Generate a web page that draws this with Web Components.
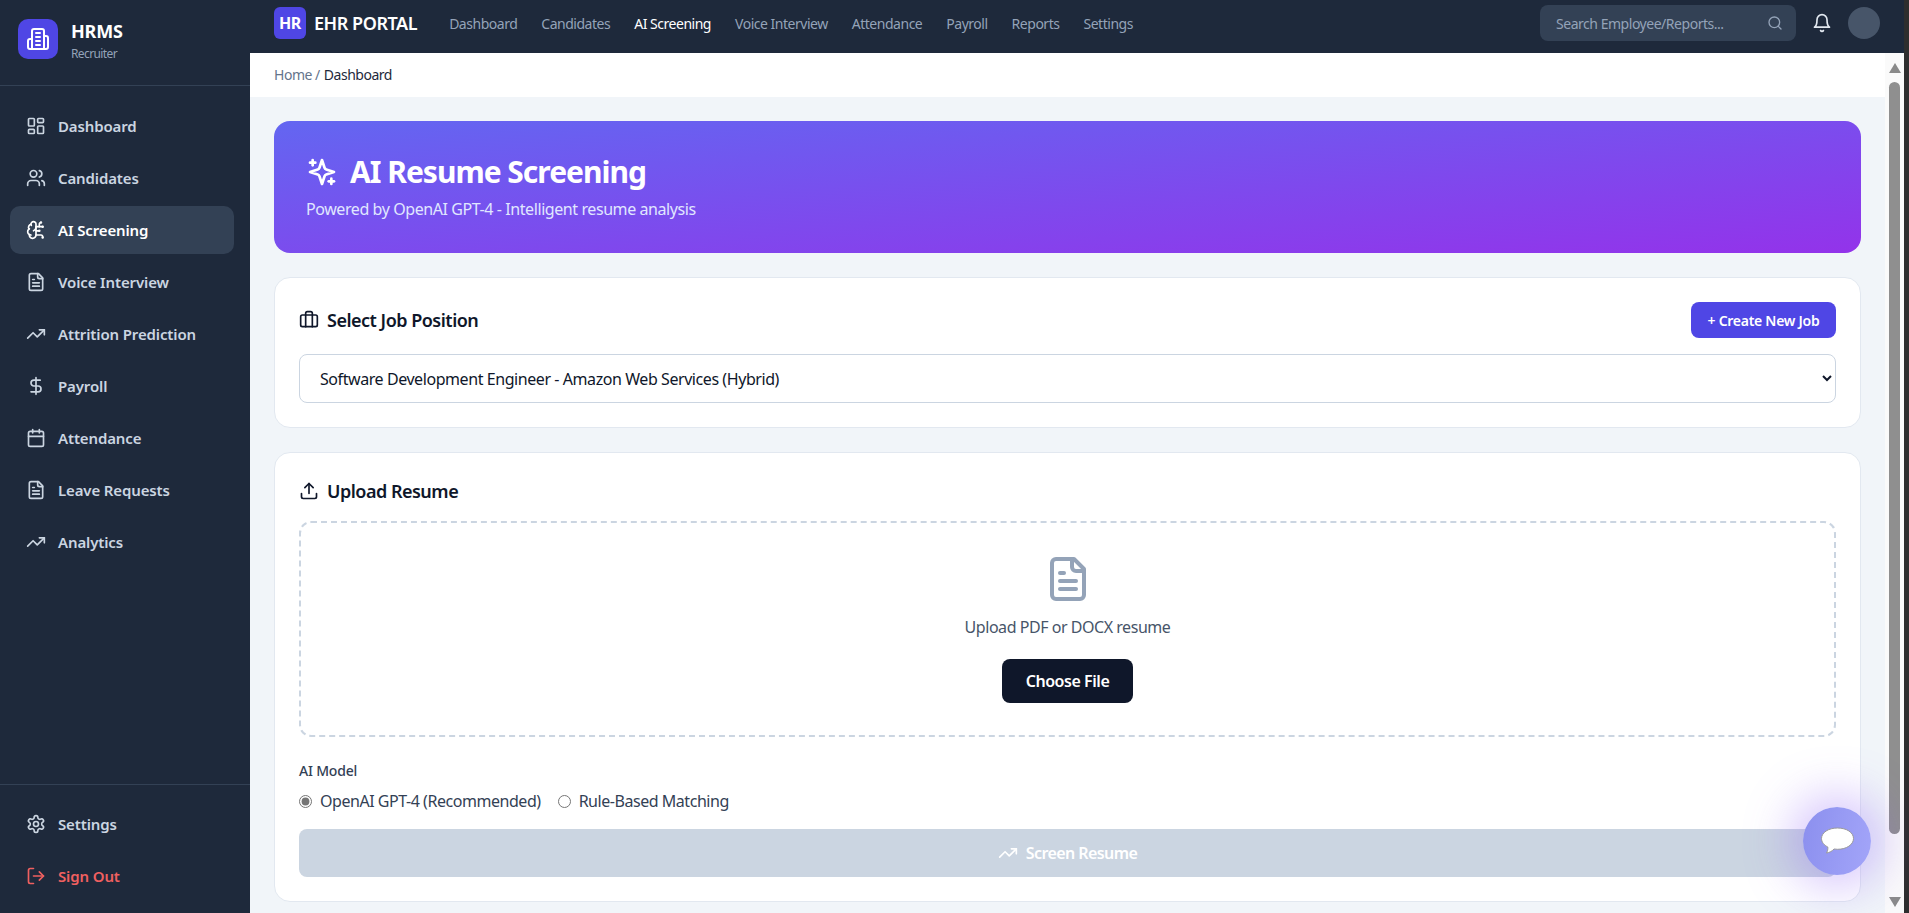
<!DOCTYPE html>
<html lang="en"><head><meta charset="utf-8"><title>HRMS</title>
<style>
html,body{margin:0;padding:0;height:100%;overflow:hidden;background:#2e2e2e}
body{font-family:"Noto Sans","Open Sans",sans-serif}
</style></head><body>
<app-shell>
  <hr-sidebar slot="side"></hr-sidebar>
  <top-bar slot="top"></top-bar>
  <bread-crumb slot="main"></bread-crumb>
  <page-body slot="main">
    <hero-banner></hero-banner>
    <job-card></job-card>
    <upload-card></upload-card>
  </page-body>
  <fake-scrollbar slot="scroll"></fake-scrollbar>
</app-shell>
<chat-fab></chat-fab>
<script>
const P={
dashboard:'<rect x="3" y="3" width="7" height="9" rx="1"/><rect x="14" y="3" width="7" height="5" rx="1"/><rect x="14" y="12" width="7" height="9" rx="1"/><rect x="3" y="16" width="7" height="5" rx="1"/>',
users:'<path d="M16 21v-2a4 4 0 0 0-4-4H6a4 4 0 0 0-4 4v2"/><circle cx="9" cy="7" r="4"/><path d="M22 21v-2a4 4 0 0 0-3-3.87"/><path d="M16 3.13a4 4 0 0 1 0 7.75"/>',
brain:'<path d="M12 5a3 3 0 1 0-5.997.125 4 4 0 0 0-2.526 5.77 4 4 0 0 0 .556 6.588A4 4 0 1 0 12 18Z"/><path d="M9 13a4.5 4.5 0 0 0 3-4"/><path d="M6.003 5.125A3 3 0 0 0 6.401 6.5"/><path d="M3.477 10.896a4 4 0 0 1 .585-.396"/><path d="M6 18a4 4 0 0 1-1.967-.516"/><path d="M12 13h4"/><path d="M12 18h6a2 2 0 0 1 2 2v1"/><path d="M12 8h8"/><path d="M16 8V5a2 2 0 0 1 2-2"/><circle cx="16" cy="13" r=".5"/><circle cx="18" cy="3" r=".5"/><circle cx="20" cy="21" r=".5"/><circle cx="20" cy="8" r=".5"/>',
file:'<path d="M15 2H6a2 2 0 0 0-2 2v16a2 2 0 0 0 2 2h12a2 2 0 0 0 2-2V7Z"/><path d="M14 2v4a2 2 0 0 0 2 2h4"/><path d="M10 9H8"/><path d="M16 13H8"/><path d="M16 17H8"/>',
trend:'<polyline points="22 7 13.5 15.5 8.5 10.5 2 17"/><polyline points="16 7 22 7 22 13"/>',
dollar:'<line x1="12" x2="12" y1="2" y2="22"/><path d="M17 5H9.5a3.5 3.5 0 0 0 0 7h5a3.5 3.5 0 0 1 0 7H6"/>',
calendar:'<path d="M8 2v4"/><path d="M16 2v4"/><rect x="3" y="4" width="18" height="18" rx="2"/><path d="M3 10h18"/>',
settings:'<path d="M12.22 2h-.44a2 2 0 0 0-2 2v.18a2 2 0 0 1-1 1.73l-.43.25a2 2 0 0 1-2 0l-.15-.08a2 2 0 0 0-2.73.73l-.22.38a2 2 0 0 0 .73 2.73l.15.1a2 2 0 0 1 1 1.72v.51a2 2 0 0 1-1 1.74l-.15.09a2 2 0 0 0-.73 2.73l.22.38a2 2 0 0 0 2.73.73l.15-.08a2 2 0 0 1 2 0l.43.25a2 2 0 0 1 1 1.73V20a2 2 0 0 0 2 2h.44a2 2 0 0 0 2-2v-.18a2 2 0 0 1 1-1.73l.43-.25a2 2 0 0 1 2 0l.15.08a2 2 0 0 0 2.73-.73l.22-.39a2 2 0 0 0-.73-2.73l-.15-.08a2 2 0 0 1-1-1.74v-.5a2 2 0 0 1 1-1.74l.15-.09a2 2 0 0 0 .73-2.73l-.22-.38a2 2 0 0 0-2.73-.73l-.15.08a2 2 0 0 1-2 0l-.43-.25a2 2 0 0 1-1-1.73V4a2 2 0 0 0-2-2z"/><circle cx="12" cy="12" r="3"/>',
logout:'<path d="M9 21H5a2 2 0 0 1-2-2V5a2 2 0 0 1 2-2h4"/><polyline points="16 17 21 12 16 7"/><line x1="21" x2="9" y1="12" y2="12"/>',
building:'<path d="M6 22V4a2 2 0 0 1 2-2h8a2 2 0 0 1 2 2v18Z"/><path d="M6 12H4a2 2 0 0 0-2 2v6a2 2 0 0 0 2 2h2"/><path d="M18 9h2a2 2 0 0 1 2 2v9a2 2 0 0 1-2 2h-2"/><path d="M10 6h4"/><path d="M10 10h4"/><path d="M10 14h4"/><path d="M10 18h4"/>',
search:'<circle cx="11" cy="11" r="8"/><path d="m21 21-4.3-4.3"/>',
bell:'<path d="M6 8a6 6 0 0 1 12 0c0 7 3 9 3 9H3s3-2 3-9"/><path d="M10.3 21a1.94 1.94 0 0 0 3.4 0"/>',
sparkles:'<path d="m12 3-1.912 5.813a2 2 0 0 1-1.275 1.275L3 12l5.813 1.912a2 2 0 0 1 1.275 1.275L12 21l1.912-5.813a2 2 0 0 1 1.275-1.275L21 12l-5.813-1.912a2 2 0 0 1-1.275-1.275L12 3Z"/><path d="M5 3v4"/><path d="M19 17v4"/><path d="M3 5h4"/><path d="M17 19h4"/>',
briefcase:'<path d="M16 20V4a2 2 0 0 0-2-2h-4a2 2 0 0 0-2 2v16"/><rect x="2" y="6" width="20" height="14" rx="2"/>',
upload:'<path d="M21 15v4a2 2 0 0 1-2 2H5a2 2 0 0 1-2-2v-4"/><polyline points="17 8 12 3 7 8"/><line x1="12" x2="12" y1="3" y2="15"/>'
};
const icon=(n,s=20,w=2)=>`<svg width="${s}" height="${s}" viewBox="0 0 24 24" fill="none" stroke="currentColor" stroke-width="${w}" stroke-linecap="round" stroke-linejoin="round" style="display:block;flex:none">${P[n]}</svg>`;
function def(name,html){customElements.define(name,class extends HTMLElement{constructor(){super();this.attachShadow({mode:'open'}).innerHTML=typeof html==='function'?html(this):html;}});}

def('app-shell',`<style>
:host{display:flex;width:1904px;height:913px;overflow:hidden;background:#f1f5f9}
.col{flex:1;min-width:0;display:flex;flex-direction:column}
.row{flex:1;min-height:0;display:flex}
.scroll{flex:1;min-width:0;overflow:hidden}
</style><slot name="side"></slot><div class="col"><slot name="top"></slot><div class="row"><div class="scroll"><slot name="main"></slot></div><slot name="scroll"></slot></div></div>`);

customElements.define('nav-item',class extends HTMLElement{constructor(){super();const r=this.attachShadow({mode:'open'});
r.innerHTML=`<style>
:host{display:flex;align-items:center;gap:12px;height:48px;margin:0 16px 4px 10px;padding:0 0 0 16px;border-radius:10px;font-size:15px;font-weight:600;letter-spacing:-.13px;color:#cbd5e1}
:host([active]){background:#334155;color:#fff}
:host([danger]){color:#f06060}
</style>${icon(this.getAttribute('icon'))}<slot></slot>`;}});

def('hr-sidebar',`<style>
:host{display:flex;flex-direction:column;width:250px;flex:none;height:913px;background:#1e293b;color:#fff}
.brand{display:flex;align-items:center;gap:13px;box-sizing:border-box;height:86px;padding:0 18px 8px;border-bottom:1px solid #334155}
.logo{width:40px;height:40px;border-radius:10px;background:#4f46e5;display:flex;align-items:center;justify-content:center;color:#fff}
.tx{padding-top:4px}
.t{font-size:18px;font-weight:700;line-height:24px;letter-spacing:-.15px}
.s{font-size:12px;line-height:16px;color:#94a3b8;margin-top:3px;letter-spacing:-.6px}
nav{flex:1;padding-top:16px}
.foot{border-top:1px solid #334155;padding:15px 0 0;height:129px;box-sizing:border-box}
</style>
<div class="brand"><div class="logo">${icon('building',24)}</div><div class="tx"><div class="t">HRMS</div><div class="s">Recruiter</div></div></div>
<nav>
<nav-item icon="dashboard">Dashboard</nav-item>
<nav-item icon="users">Candidates</nav-item>
<nav-item icon="brain" active>AI Screening</nav-item>
<nav-item icon="file">Voice Interview</nav-item>
<nav-item icon="trend">Attrition Prediction</nav-item>
<nav-item icon="dollar">Payroll</nav-item>
<nav-item icon="calendar">Attendance</nav-item>
<nav-item icon="file">Leave Requests</nav-item>
<nav-item icon="trend">Analytics</nav-item>
</nav>
<div class="foot"><nav-item icon="settings">Settings</nav-item><nav-item icon="logout" danger>Sign Out</nav-item></div>`);

def('top-bar',`<style>
:host{display:flex;align-items:center;flex:none;background:#1e293b;padding:0 24px 7px;box-sizing:border-box;height:53px;color:#fff}
.hr{width:32px;height:32px;border-radius:6px;background:#4f46e5;display:flex;align-items:center;justify-content:center;font-size:16px;font-weight:700;letter-spacing:-.3px}
.name{font-size:18px;font-weight:600;margin-left:8px;letter-spacing:-.45px}
.links{display:flex;gap:24px;margin-left:32px;font-size:14px;letter-spacing:-.48px;color:#94a3b8}
.on{color:#fff}
.sp{flex:1}
.search{display:flex;align-items:center;justify-content:space-between;width:256px;height:36px;box-sizing:border-box;padding:0 13px 0 16px;border-radius:8px;background:#334155;color:#94a3b8;font-size:14px;letter-spacing:-.47px}
.bell{margin-left:16px;color:#e2e8f0}
.av{width:32px;height:32px;border-radius:50%;background:#475569;margin-left:16px}
</style>
<div class="hr">HR</div><div class="name">EHR PORTAL</div>
<div class="links"><span>Dashboard</span><span>Candidates</span><span class="on">AI Screening</span><span>Voice Interview</span><span>Attendance</span><span>Payroll</span><span>Reports</span><span>Settings</span></div>
<div class="sp"></div>
<div class="search"><span>Search Employee/Reports...</span>${icon('search',16)}</div>
<div class="bell">${icon('bell',20)}</div><div class="av"></div>`);

def('bread-crumb',`<style>
:host{display:flex;align-items:center;height:44px;box-sizing:border-box;padding:0 24px 2px;background:#fff;font-size:14px;letter-spacing:-.48px;color:#64748b}
b{font-weight:400;color:#1e293b;margin-left:4px}
</style><span>Home /</span><b>Dashboard</b>`);

def('page-body',`<style>:host{display:flex;flex-direction:column;gap:24px;padding:24px}</style><slot></slot>`);

def('hero-banner',`<style>
:host{display:block;height:132px;box-sizing:border-box;padding:33px 32px 31px;border-radius:16px;background:linear-gradient(to bottom right,#6366f1,#9333ea);color:#fff}
h1{margin:0;display:flex;align-items:center;gap:12px;font-size:30px;line-height:36px;font-weight:700;letter-spacing:-1px}
p{margin:7px 0 0;font-size:16px;line-height:24px;color:#e0e7ff;letter-spacing:-.42px}
</style><h1>${icon('sparkles',32)}AI Resume Screening</h1><p>Powered by OpenAI GPT-4 - Intelligent resume analysis</p>`);

def('card-head',h=>`<style>
:host{display:flex;align-items:center;gap:8px;font-size:18px;font-weight:600;color:#0f172a;letter-spacing:-.5px}
</style>${icon(h.getAttribute('icon'),20)}<slot></slot>`);

def('job-card',`<style>
:host{display:block;background:#fff;border:1px solid #e2e8f0;border-radius:16px;padding:24px}
.h{display:flex;align-items:center;justify-content:space-between;height:36px;margin-bottom:16px}
button{height:36px;width:145px;border:0;border-radius:8px;background:#4f46e5;color:#fff;font:600 14px "Noto Sans",sans-serif;letter-spacing:-.28px}
select{display:block;width:100%;height:49px;box-sizing:border-box;border:1px solid #cbd5e1;border-radius:8px;background:#fff;padding:0 16px;font:400 16px "Noto Sans",sans-serif;letter-spacing:-.43px;color:#0f172a}
</style><div class="h"><card-head icon="briefcase">Select Job Position</card-head><button>+ Create New Job</button></div>
<select><option>Software Development Engineer - Amazon Web Services (Hybrid)</option></select>`);

def('upload-card',`<style>
:host{display:block;background:#fff;border:1px solid #e2e8f0;border-radius:16px;padding:24px}
card-head{height:28px;margin-bottom:16px}
.drop{box-sizing:border-box;height:216px;border:2px dashed #cbd5e1;border-radius:12px;padding:32px;display:flex;flex-direction:column;align-items:center;color:#94a3b8}
.drop p{margin:12px 0 20px;font-size:16px;line-height:24px;color:#475569;letter-spacing:-.46px}
.choose{width:131px;height:44px;border:0;border-radius:8px;background:#0f172a;color:#fff;font:600 16px "Noto Sans",sans-serif;letter-spacing:-.45px}
.lab{margin-top:24px;font-size:14px;line-height:20px;font-weight:500;color:#334155;letter-spacing:-.2px}
.radios{display:flex;align-items:center;height:24px;margin-top:8px;font-size:16px;color:#334155;letter-spacing:-.46px}
label{display:flex;align-items:center;margin-right:17px}
input{width:13px;height:13px;margin:0 8px 0 0;accent-color:#757575}
.go{display:flex;align-items:center;justify-content:center;gap:8px;width:100%;height:48px;margin-top:16px;border:0;border-radius:8px;background:#cbd5e1;color:#fff;font:600 16px "Noto Sans",sans-serif;letter-spacing:-.58px}
</style><card-head icon="upload">Upload Resume</card-head>
<div class="drop">${icon('file',48)}<p>Upload PDF or DOCX resume</p><button class="choose">Choose File</button></div>
<div class="lab">AI Model</div>
<div class="radios"><label><input type="radio" name="m" checked>OpenAI GPT-4 (Recommended)</label><label><input type="radio" name="m">Rule-Based Matching</label></div>
<button class="go">${icon('trend',20)}Screen Resume</button>`);

def('fake-scrollbar',`<style>
:host{display:flex;flex-direction:column;align-items:center;width:19px;flex:none;background:#fafafa;box-sizing:border-box;padding-top:10px}
.up,.dn{width:0;height:0;border-left:6.5px solid transparent;border-right:6.5px solid transparent}
.up{border-bottom:10px solid #8a8a8a}
.dn{border-top:10px solid #8a8a8a;margin-top:63px}
.th{width:11px;height:752px;border-radius:6px;background:#8f8f8f;margin-top:9px}
</style><div class="up"></div><div class="th"></div><div class="dn"></div>`);

def('chat-fab',`<style>
:host{position:fixed;left:1803px;top:807px;width:68px;height:68px;border-radius:50%;display:flex;align-items:center;justify-content:center;background:linear-gradient(100deg,#8b8fee,#a3a5f9);box-shadow:0 0 48px 12px rgba(139,92,246,.36)}
</style><svg width="36" height="32" viewBox="0 0 36 32"><path d="M18.500 3C9.500 3 2.500 7.500 2.500 13.500c0 3.600 2.500 6.600 6.300 8.500.3 2-.3 4.500-1.300 6 3-.4 5.800-2 7.500-4 1.100.2 2.300.3 3.500.3 9 0 16-4.700 16-10.800S27.500 3 18.500 3Z" fill="#fff" stroke="#9a9a9a" stroke-width="1"/></svg>`);
</script>
</body></html>
